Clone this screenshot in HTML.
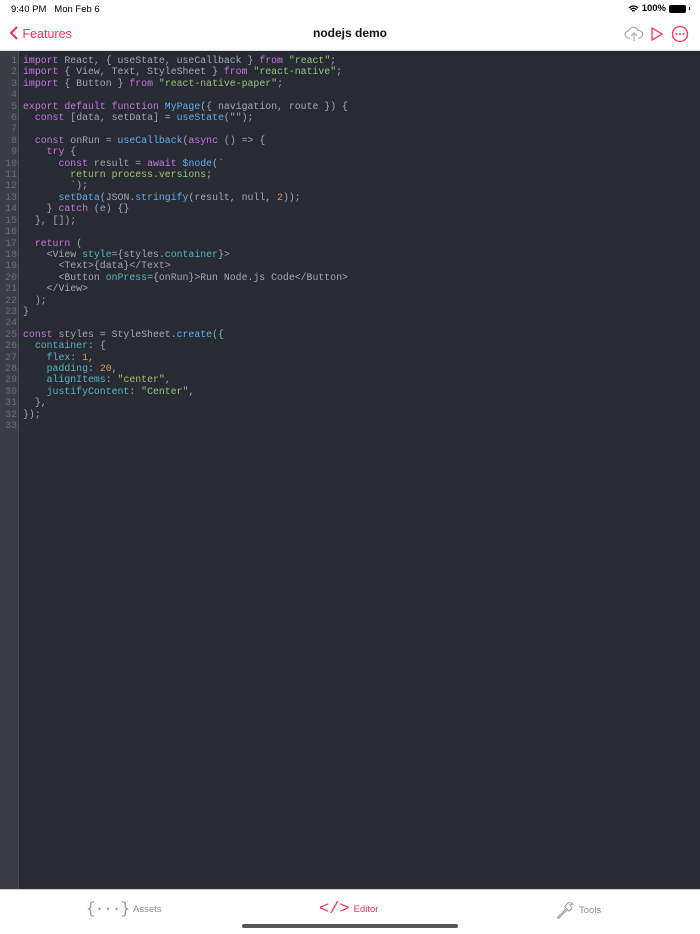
<!DOCTYPE html>
<html><head><meta charset="utf-8"><style>
*{margin:0;padding:0;box-sizing:border-box}
body{width:700px;height:934px;background:#fff;font-family:"Liberation Sans",sans-serif;position:relative;overflow:hidden}
.status{position:absolute;top:4px;left:11px;font-size:9.5px;color:#000}
.status2{position:absolute;top:3px;right:10px;font-size:9.5px;color:#000;display:flex;align-items:center;gap:3px}
.nav{position:absolute;top:0;left:0;width:700px;height:51px;border-bottom:1px solid #ddd}
.back{position:absolute;left:9px;top:26px;color:#ff2d55;font-size:12.5px}
.title{position:absolute;top:26px;width:700px;text-align:center;font-size:12px;font-weight:bold;color:#111}
.editor{position:absolute;top:51px;left:0;width:700px;height:838px;background:#282b33}
.gutter{position:absolute;top:0;left:0;width:19px;height:838px;background:#3a3d45;border-right:1px solid #4a4d55}
pre{position:absolute;top:4px;left:23px;font-family:"Liberation Mono",monospace;font-size:9.85px;line-height:11.4px;color:#a3a8b2}
.ln{position:absolute;top:4px;left:0;width:17px;text-align:right;font-family:"Liberation Mono",monospace;font-size:9.85px;line-height:11.4px;color:#6a6e77}
.k{color:#c678dd}.s{color:#98c379}.f{color:#61afef}.p{color:#56b6c2}.n{color:#d19a66}
.tab{position:absolute;top:889px;left:0;width:700px;height:45px;background:#fff;border-top:1px solid #ccc}
.ti{position:absolute;top:10px;font-size:9.5px;color:#8e8e93;display:flex;align-items:center;gap:4px}
.home{position:absolute;left:242px;top:924px;width:216px;height:4px;border-radius:2px;background:#555}
</style></head><body>
<div class="nav"></div>
<div class="status">9:40 PM&nbsp;&nbsp; Mon Feb 6</div>
<div class="status2"><svg width="11" height="8" viewBox="0 0 11 8"><path d="M1 3Q5.5-1 10 3M2.5 4.6Q5.5 2 8.5 4.6M4 6.2Q5.5 5 7 6.2" stroke="#000" stroke-width="1.3" fill="none"/></svg><b style="font-weight:600">100%</b><span style="display:inline-block;width:17px;height:8px;background:#000;border-radius:2px"></span><span style="display:inline-block;width:1px;height:3px;background:#000"></span></div>
<div class="back"><svg width="10" height="14" viewBox="0 0 10 14" style="vertical-align:-2px"><path d="M8 1L2 7l6 6" stroke="#ff2d55" stroke-width="2" fill="none"/></svg> Features</div>
<div class="title">nodejs demo</div>
<svg style="position:absolute;left:624px;top:26px" width="20" height="16" viewBox="0 0 20 16"><path d="M6 12H4.5A3.5 3.5 0 0 1 4.5 5 5 5 0 0 1 14 4.5 3.5 3.5 0 0 1 15.5 12H14M10 15V7M7 10l3-3 3 3" stroke="#aaa" stroke-width="1.2" fill="none"/></svg>
<svg style="position:absolute;left:650px;top:26px" width="14" height="16" viewBox="0 0 14 16"><path d="M2 2L12 8 2 14Z" stroke="#ff2d55" stroke-width="1.3" fill="none"/></svg>
<svg style="position:absolute;left:671px;top:25px" width="18" height="18" viewBox="0 0 18 18"><circle cx="9" cy="9" r="7.5" stroke="#ff2d55" stroke-width="1.3" fill="none"/><circle cx="5.5" cy="9" r="1" fill="#ff2d55"/><circle cx="9" cy="9" r="1" fill="#ff2d55"/><circle cx="12.5" cy="9" r="1" fill="#ff2d55"/></svg>
<div class="editor"><div class="gutter"></div>
<div class="ln">1<br>2<br>3<br>4<br>5<br>6<br>7<br>8<br>9<br>10<br>11<br>12<br>13<br>14<br>15<br>16<br>17<br>18<br>19<br>20<br>21<br>22<br>23<br>24<br>25<br>26<br>27<br>28<br>29<br>30<br>31<br>32<br>33</div>
<pre><span class="k">import</span> React, { useState, useCallback } <span class="k">from</span> <span class="s">"react"</span>;
<span class="k">import</span> { View, Text, StyleSheet } <span class="k">from</span> <span class="s">"react-native"</span>;
<span class="k">import</span> { Button } <span class="k">from</span> <span class="s">"react-native-paper"</span>;

<span class="k">export default function</span> <span class="f">MyPage</span>({ navigation, route }) {
  <span class="k">const</span> [data, setData] = <span class="f">useState</span>("");

  <span class="k">const</span> onRun = <span class="f">useCallback</span>(<span class="k">async</span> () =&gt; {
    <span class="k">try</span> {
      <span class="k">const</span> result = <span class="k">await</span> <span class="f">$node</span>(`
<span class="s">        return process.versions;
        `</span>);
      <span class="f">setData</span>(JSON.<span class="f">stringify</span>(result, null, <span class="n">2</span>));
    } <span class="k">catch</span> (e) {}
  }, []);

  <span class="k">return</span> (
    &lt;View <span class="p">style</span>={styles.<span class="p">container</span>}&gt;
      &lt;Text&gt;{data}&lt;/Text&gt;
      &lt;Button <span class="p">onPress</span>={onRun}&gt;Run Node.js Code&lt;/Button&gt;
    &lt;/View&gt;
  );
}

<span class="k">const</span> styles = StyleSheet.<span class="f">create</span>({
  <span class="p">container</span>: {
    <span class="p">flex</span>: <span class="n">1</span>,
    <span class="p">padding</span>: <span class="n">20</span>,
    <span class="p">alignItems</span>: <span class="s">"center"</span>,
    <span class="p">justifyContent</span>: <span class="s">"Center"</span>,
  },
});
</pre></div>
<div class="tab">
<div class="ti" style="left:86px"><span style="font-family:'Liberation Mono',monospace;font-size:16px;color:#999;letter-spacing:-1px">{&middot;&middot;&middot;}</span> Assets</div>
<div class="ti" style="left:319px;color:#ff2d55"><span style="font-family:'Liberation Mono',monospace;font-size:17px">&lt;/&gt;</span> Editor</div>
<div class="ti" style="left:555px"><svg width="20" height="20" viewBox="0 0 20 20"><path d="M2 18l9-9M3 19l9-9M10 6l3-3q3-1 5 1l-3 1 2 3-3 3-4-4z" stroke="#999" stroke-width="1" fill="none"/></svg> Tools</div>
</div>
<div class="home"></div>
</body></html>
